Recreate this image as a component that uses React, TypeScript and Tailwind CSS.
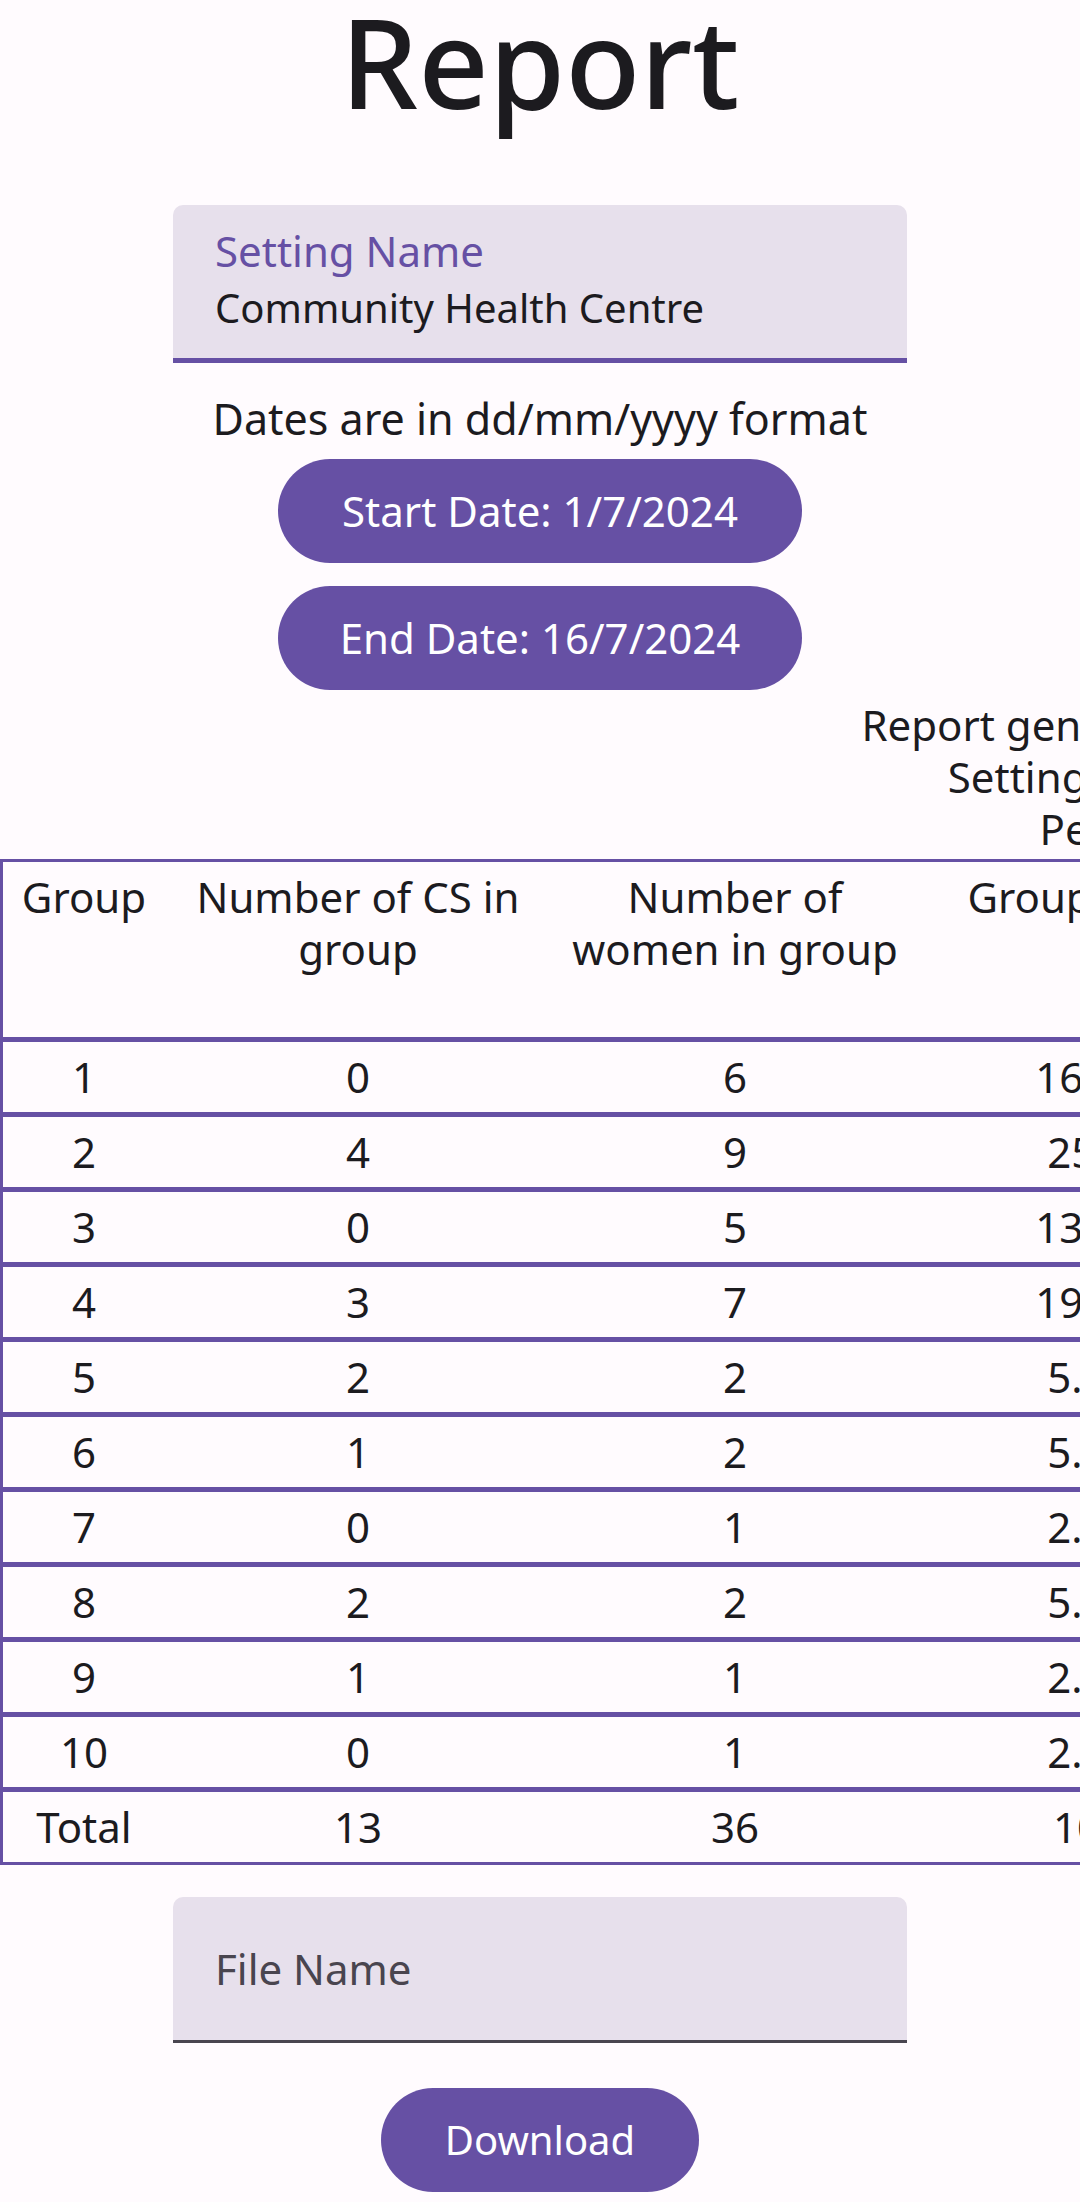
const font = "font-['Noto_Sans',sans-serif]"

const columns = [
  { title: "Group", width: "w-[162px]" },
  { title: "Number of CS in\ngroup", width: "w-[386px]" },
  { title: "Number of\nwomen in group", width: "w-[368px]" },
  { title: "Group %age", width: "w-[340px]" },
  { title: "CS rate in\ngroup (%)", width: "w-[440px]" },
  { title: "Group % of\ntotal CS", width: "w-[440px]" },
  { title: "Women without\nCS", width: "w-[429px]" },
]

const rows = [
  ["1", "0", "6", "16.67", "0.0", "0.0", "6"],
  ["2", "4", "9", "25.0", "44.44", "30.77", "5"],
  ["3", "0", "5", "13.89", "0.0", "0.0", "5"],
  ["4", "3", "7", "19.44", "42.86", "23.08", "4"],
  ["5", "2", "2", "5.56", "100.0", "15.38", "0"],
  ["6", "1", "2", "5.56", "50.0", "7.69", "1"],
  ["7", "0", "1", "2.78", "0.0", "0.0", "1"],
  ["8", "2", "2", "5.56", "100.0", "15.38", "0"],
  ["9", "1", "1", "2.78", "100.0", "7.69", "0"],
  ["10", "0", "1", "2.78", "0.0", "0.0", "1"],
  ["Total", "13", "36", "100", "36.11", "100", "23"],
]

function PillButton({ label, className = "" }: { label: string; className?: string }) {
  return (
    <button
      className={`h-[104px] rounded-full bg-[#6650a4] text-white leading-none flex items-center justify-center ${className}`}
    >
      {label}
    </button>
  )
}

function ReportTable() {
  return (
    <div className="border-t-[3px] border-x-[3px] border-[#6650a4] w-max">
      <div className="flex border-b-[5px] border-[#6650a4]">
        {columns.map((col) => (
          <div
            key={col.title}
            className={`${col.width} h-[175px] pt-[9px] px-2 text-center whitespace-pre-line leading-[52px]`}
          >
            {col.title}
          </div>
        ))}
      </div>
      {rows.map((row, i) => (
        <div
          key={row[0]}
          className={`flex border-[#6650a4] ${i === rows.length - 1 ? "border-b-[3px]" : "border-b-[5px]"}`}
        >
          {row.map((cell, j) => (
            <div key={j} className={`${columns[j].width} h-[70px] flex items-center justify-center leading-[52px]`}>
              {cell}
            </div>
          ))}
        </div>
      ))}
    </div>
  )
}

export default function App() {
  return (
    <div className={`${font} bg-[#fffbfe] text-[#1c1b1f] min-h-[2202px] w-[1080px] overflow-hidden flex flex-col items-center`}>
      <h1 className="text-[123px] leading-none font-medium">Report</h1>

      <div className="mt-[82px] w-[734px] h-[158px] rounded-t-[10px] bg-[#e7e0ec] border-b-[5px] border-[#6650a4] px-[42px] pt-[25px]">
        <div className="text-[42px] leading-none text-[#6650a4]">Setting Name</div>
        <div className="mt-[16px] text-[40px] leading-none">Community Health Centre</div>
      </div>

      <p className="mt-[30px] text-[43px] leading-[52px]">Dates are in dd/mm/yyyy format</p>

      <PillButton label="Start Date: 1/7/2024" className="mt-[14px] w-[524px] text-[42px]" />
      <PillButton label="End Date: 16/7/2024" className="mt-[23px] w-[524px] text-[42px]" />

      <div className="self-stretch overflow-hidden">
        <div className="w-max">
          <div className="mt-[9px] text-center text-[42px] leading-[52px]">
            <p>Report generated on 16/7/2024 at 10:30:45</p>
            <p>Setting: Community Health Centre</p>
            <p>Period: 1/7/24 to 16/7/24</p>
          </div>
          <div className="mt-[4px] text-[42px]">
            <ReportTable />
          </div>
        </div>
      </div>

      <div className="mt-[32px] w-[734px] h-[146px] rounded-t-[10px] bg-[#e7e0ec] border-b-[3px] border-[#49454f] px-[42px] flex items-center">
        <span className="text-[42px] leading-none text-[#49454f]">File Name</span>
      </div>

      <PillButton label="Download" className="mt-[45px] w-[318px] text-[40px]" />
    </div>
  )
}
